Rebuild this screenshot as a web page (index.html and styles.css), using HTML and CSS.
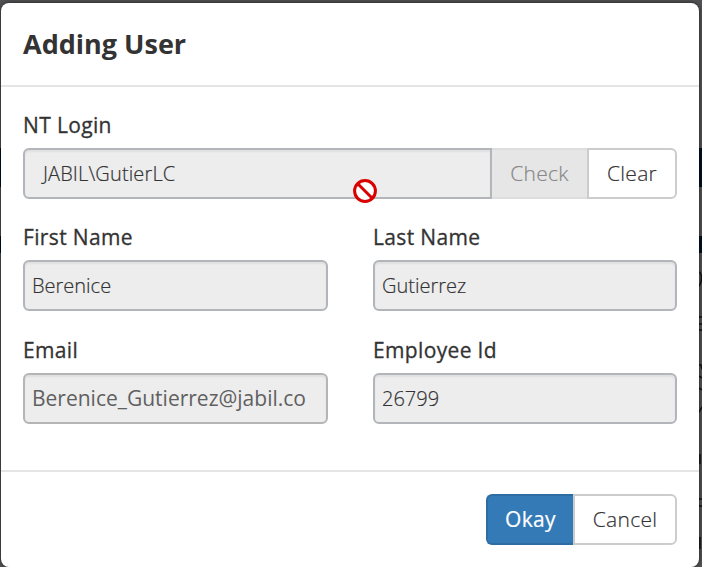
FILE: index.html
```html
<!DOCTYPE html>
<html lang="en">
<head>
<meta charset="utf-8">
<title>Adding User</title>
<link rel="stylesheet" href="styles.css">
</head>
<body>
<div class="backdrop"></div>
<svg class="page-edge" viewBox="0 0 3 310"><path d="M0 15Q2.5 16 2.500 21T0 29M0 60H3M0 67H3M0 73H3M0 108H2L3 112M0 119L3 121M0 131L3 133M3 150L0 155M1 280V292M1 197V207M0 242H3M0 249H3"/></svg>
<main class="modal">
  <header class="modal-header"><h1><span>Adding User</span></h1></header>
  <form class="modal-body">
    <div class="field login">
      <label><span>NT Login</span></label>
      <div class="input-group">
        <div class="control"><span>JABIL\GutierLC</span></div>
        <div class="btn disabled"><span>Check</span></div>
        <div class="btn clear"><span>Clear</span></div>
        <svg class="forbidden" viewBox="0 0 24 24"><circle cx="12" cy="12" r="10.4"/><path d="M5 5L19 19"/></svg>
      </div>
    </div>
    <div class="row">
      <div class="field"><label><span>First Name</span></label><div class="control"><span>Berenice</span></div></div>
      <div class="field"><label><span>Last Name</span></label><div class="control"><span>Gutierrez</span></div></div>
    </div>
    <div class="row">
      <div class="field"><label><span>Email</span></label><div class="control email"><span>Berenice_Gutierrez@jabil.co</span></div></div>
      <div class="field"><label><span>Employee Id</span></label><div class="control"><span>26799</span></div></div>
    </div>
  </form>
  <footer class="modal-footer">
    <div class="btn primary"><span>Okay</span></div>
    <div class="btn cancel"><span>Cancel</span></div>
  </footer>
</main>
</body>
</html>
```
FILE: styles.css
```css
* { box-sizing: border-box; }
body {
  margin: 0;
  width: 702px;
  height: 567px;
  padding: 3px 3px 0 1px;
  overflow: hidden;
  background: #505052;
  font: 300 20px/28px "Open Sans", sans-serif;
  color: #333;
}
.backdrop {
  position: absolute;
  inset: 0;
  background:
    linear-gradient(#001022, #001022) 0 148px / 100% 39px no-repeat,
    linear-gradient(#001022, #001022) 0 236px / 100% 17px no-repeat,
    linear-gradient(#505052, #505052);
}
.page-edge {
  position: absolute;
  left: 699px;
  top: 257px;
  width: 3px;
  height: 310px;
  fill: none;
  stroke: #111;
  stroke-width: 1.5;
}
.modal {
  position: relative;
  width: 698px;
  height: 564px;
  background: #fff;
  border-radius: 8px;
  box-shadow: 0 0 3px 1px rgba(0, 0, 0, .4);
}
.modal-header {
  height: 84px;
  padding: 22px 22px 0;
  border-bottom: 2px solid #e5e5e5;
}
h1 {
  margin: 0;
  font-size: 27px;
  line-height: 38px;
  font-weight: 700;
}
.modal-body {
  height: 383px;
  padding: 24px 22px 0;
}
.field { width: 305px; }
.field.login { width: 654px; }
.row {
  display: flex;
  justify-content: space-between;
  width: 654px;
  margin-top: 24px;
}
.row + .row { margin-top: 25px; }
.row .field:last-child { width: 304px; }
label {
  display: block;
  height: 28px;
  margin-bottom: 9px;
  font-size: 21px;
  font-weight: 500;
  letter-spacing: .35px;
  -webkit-text-stroke: .3px currentColor;
}
.control {
  display: flex;
  align-items: center;
  height: 51px;
  padding: 0 7px;
  border: 2px solid #b2b6ba;
  border-radius: 6px;
  background: #ededed;
  box-shadow: inset 0 2px 2px rgba(0, 0, 0, .06);
  white-space: nowrap;
  -webkit-text-stroke: .2px currentColor;
}
.control.email {
  color: #606060;
  border-color: #b5b5b5;
  font-size: 21px;
  font-weight: 400;
  -webkit-text-stroke: 0;
}
.control.email span { position: relative; top: -1px; }
.input-group {
  position: relative;
  display: flex;
}
.input-group .control {
  width: 469px;
  padding-left: 18px;
  border-radius: 6px 0 0 6px;
  letter-spacing: .13px;
}
.btn {
  display: flex;
  align-items: center;
  justify-content: center;
  height: 51px;
  padding-bottom: 2px;
  border: 2px solid #ccc;
  font-size: 21px;
  letter-spacing: .3px;
  -webkit-text-stroke: .2px currentColor;
}
.disabled {
  width: 95px;
  background: #e6e6e6;
  border-color: #ddd;
  border-width: 2px 0;
  color: #888;
}
.clear { width: 90px; border-radius: 0 6px 6px 0; }
.forbidden {
  position: absolute;
  left: 330px;
  top: 31px;
  width: 24px;
  height: 24px;
  fill: none;
  stroke: #d90000;
  stroke-width: 3;
}
.forbidden circle { fill: #fff; }
.modal-footer {
  display: flex;
  justify-content: flex-end;
  height: 97px;
  padding: 22px 22px 0;
  border-top: 2px solid #e5e5e5;
}
.primary {
  width: 87px;
  border-color: #2e6da4;
  border-right: 0;
  border-radius: 6px 0 0 6px;
  background: #337ab7;
  color: #fff;
  font-weight: 400;
}
.cancel { width: 104px; border-radius: 0 6px 6px 0; }
```
